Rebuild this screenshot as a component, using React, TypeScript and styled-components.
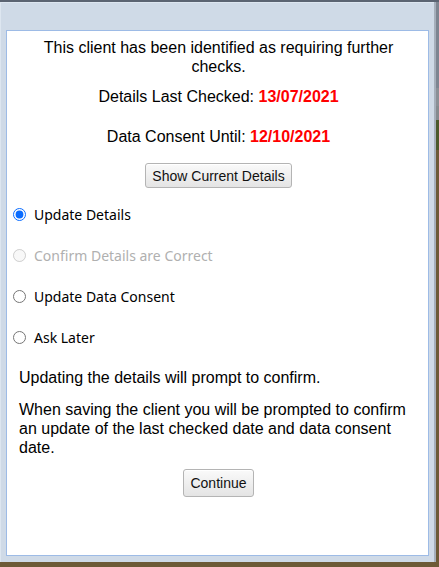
import React from "react";
import styled, { createGlobalStyle } from "styled-components";

const Global = createGlobalStyle`
  html, body { margin: 0; padding: 0; }
  body { background: #6d5a37; font-family: "Liberation Sans", Arial, sans-serif; }
`;

const Page = styled.div`
  width: 439px;
  height: 567px;
  display: flex;
  flex-direction: column;
  overflow: hidden;
`;

const TopStrip = styled.div`
  height: 2px;
  background: #5b6472;
  flex: none;
`;

const Middle = styled.div`
  display: flex;
  flex: none;
`;

const RightStrip = styled.div`
  flex: 1;
  display: flex;
  flex-direction: column;
`;

const StripBlock = styled.div<{ $h: number; $c: string }>`
  height: ${(p) => p.$h}px;
  background: ${(p) => p.$c};
`;

const Dialog = styled.div`
  width: 434px;
  height: 560px;
  box-sizing: border-box;
  background: #cfdae7;
  border-left: 1px solid #dde6f0;
  border-top: 1px solid #dde6f0;
  box-shadow: 2px 0 0 #a6afbb;
  padding: 27px 5px 6px 5px;
  display: flex;
  margin-right: 2px;
`;

const Panel = styled.div`
  flex: 1;
  background: #ffffff;
  border: 1px solid #9dbbe6;
  padding: 7px 10px 0 12px;
  display: flex;
  flex-direction: column;
  color: #000;
  font-size: 16px;
  line-height: 19px;
`;

const Center = styled.p<{ $mt?: number }>`
  margin: ${(p) => p.$mt ?? 0}px 0 0;
  text-align: center;
`;

const Red = styled.span`
  color: #ff0000;
  font-weight: bold;
`;

const Button = styled.button<{ $mt: number; $h: number }>`
  align-self: center;
  box-sizing: border-box;
  height: ${(p) => p.$h}px;
  margin-top: ${(p) => p.$mt}px;
  font-family: "Liberation Sans", Arial, sans-serif;
  font-size: 14px;
  line-height: 16px;
  color: #111;
  padding: 0 6px;
  border: 1px solid #b4b4b4;
  border-radius: 3px;
  background: linear-gradient(#fafafa, #e4e4e4);
  box-shadow: inset 0 1px 0 #ffffff;
`;

const Options = styled.div`
  display: flex;
  flex-direction: column;
  gap: 22px;
  margin-top: 17px;
  margin-left: -6px;
`;

const OptionRow = styled.label<{ $disabled?: boolean }>`
  display: flex;
  align-items: center;
  gap: 8px;
  height: 19px;
  font-family: "Noto Sans", "Open Sans", sans-serif;
  font-size: 14px;
  color: ${(p) => (p.$disabled ? "#b0b0b0" : "#000")};
`;

const Radio = styled.input`
  margin: 0;
  width: 13px;
  height: 13px;
  accent-color: #0a6cff;
`;

const Para = styled.p<{ $mt: number }>`
  margin: ${(p) => p.$mt}px 0 0;
  text-align: left;
`;

const options = [
  { label: "Update Details", checked: true },
  { label: "Confirm Details are Correct", disabled: true },
  { label: "Update Data Consent" },
  { label: "Ask Later" },
];

export default function App() {
  return (
    <Page>
      <Global />
      <TopStrip />
      <Middle>
        <Dialog>
          <Panel>
            <Center>This client has been identified as requiring further checks.</Center>
            <Center $mt={11}>
              Details Last Checked: <Red>13/07/2021</Red>
            </Center>
            <Center $mt={21}>
              Data Consent Until: <Red>12/10/2021</Red>
            </Center>
            <Button $mt={17} $h={25}>Show Current Details</Button>
            <Options>
              {options.map((o) => (
                <OptionRow key={o.label} $disabled={o.disabled}>
                  <Radio type="radio" name="opt" defaultChecked={o.checked} disabled={o.disabled} />
                  {o.label}
                </OptionRow>
              ))}
            </Options>
            <Para $mt={21}>Updating the details will prompt to confirm.</Para>
            <Para $mt={13}>
              When saving the client you will be prompted to confirm an update of the last checked date and data consent date.
            </Para>
            <Button $mt={12} $h={28}>Continue</Button>
          </Panel>
        </Dialog>
        <RightStrip>
          <StripBlock $h={86} $c="#7d8591" />
          <StripBlock $h={18} $c="#8a8f96" />
          <StripBlock $h={14} $c="#858a8f" />
          <StripBlock $h={30} $c="#4b5a2b" />
          <StripBlock $h={412} $c="#6d5a37" />
        </RightStrip>
      </Middle>
    </Page>
  );
}
